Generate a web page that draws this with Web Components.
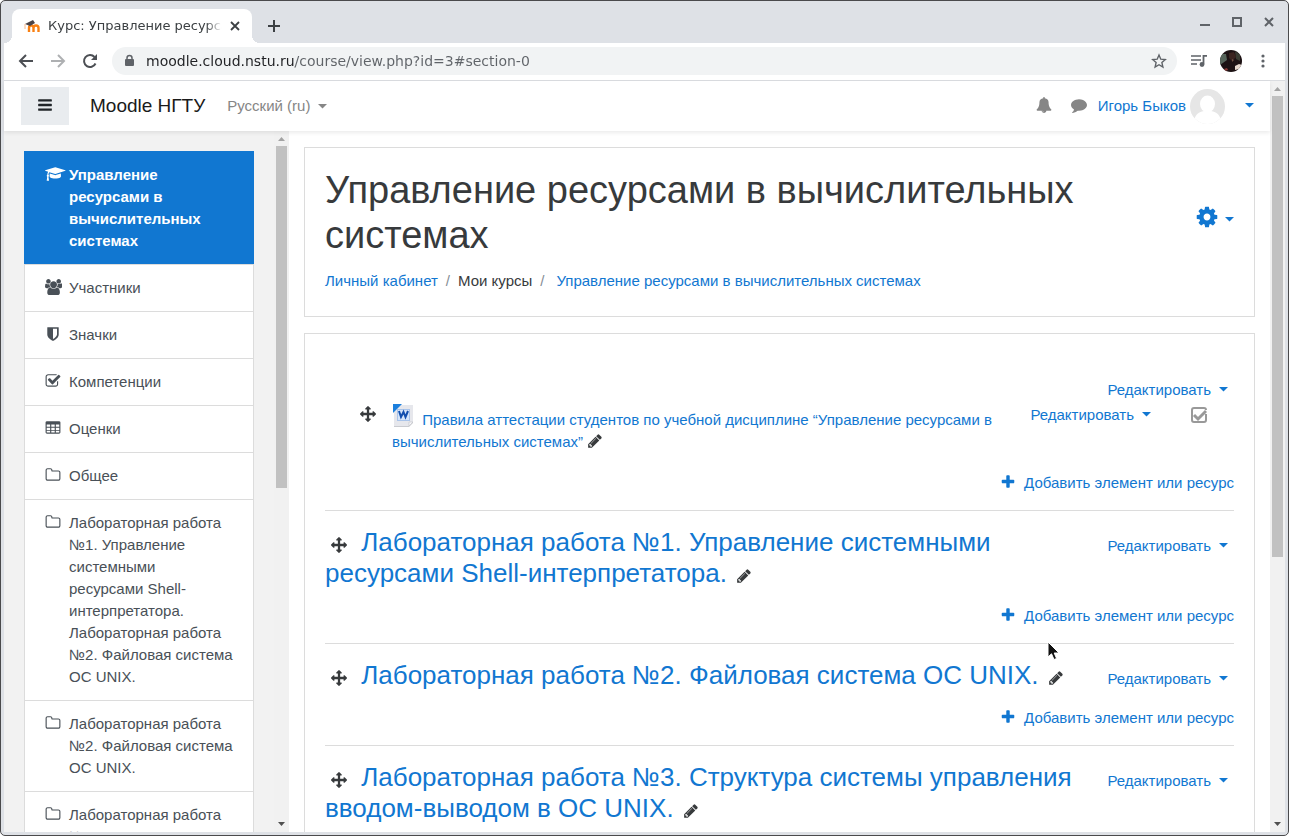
<!DOCTYPE html>
<html lang="ru">
<head>
<meta charset="utf-8">
<title>Курс: Управление ресурсами в вычислительных системах</title>
<style>
html,body{height:100%;margin:0}
body{font:15px/22px "Liberation Sans",Arial,sans-serif;color:#373a3c;background:#fff;overflow:hidden}
</style>
</head>
<body>
<browser-window>
  <browser-tabs slot="tabs">Курс: Управление ресурсами</browser-tabs>
  <browser-toolbar slot="toolbar"></browser-toolbar>
  <moodle-page>
    <moodle-navbar slot="navbar"></moodle-navbar>
    <course-drawer slot="drawer">
      <drawer-item icon="cap" active>Управление ресурсами в вычислительных системах</drawer-item>
      <drawer-item icon="users">Участники</drawer-item>
      <drawer-item icon="shield">Значки</drawer-item>
      <drawer-item icon="check">Компетенции</drawer-item>
      <drawer-item icon="table">Оценки</drawer-item>
      <drawer-item icon="folder">Общее</drawer-item>
      <drawer-item icon="folder">Лабораторная работа №1. Управление системными ресурсами Shell-интерпретатора. Лабораторная работа №2. Файловая система ОС UNIX.</drawer-item>
      <drawer-item icon="folder">Лабораторная работа №2. Файловая система ОС UNIX.</drawer-item>
      <drawer-item icon="folder">Лабораторная работа №3. Структура системы управления вводом-выводом в ОС UNIX.</drawer-item>
    </course-drawer>
    <content-card>
      <course-header>Управление ресурсами в вычислительных системах</course-header>
    </content-card>
    <content-card>
      <course-section untitled>
        <course-activity slot="activity">Правила аттестации студентов по учебной дисциплине “Управление ресурсами в вычислительных системах”</course-activity>
      </course-section>
      <course-section>Лабораторная работа №1. Управление системными ресурсами Shell-интерпретатора.</course-section>
      <course-section>Лабораторная работа №2. Файловая система ОС UNIX.</course-section>
      <course-section>Лабораторная работа №3. Структура системы управления вводом-выводом в ОС UNIX.</course-section>
    </content-card>
  </moodle-page>
  <mouse-pointer slot="pointer"></mouse-pointer>
</browser-window>

<script>
const define = (name, html, setup) => {
  const template = document.createElement('template');
  template.innerHTML = `<style>
    *{box-sizing:border-box}
    :host{display:block;box-sizing:border-box}
    a{color:#1177d1;text-decoration:none}
    button{font:inherit;color:inherit;background:none;border:0;padding:0;margin:0;cursor:pointer}
  </style>` + html;
  customElements.define(name, class extends HTMLElement {
    static observedAttributes = ['name', 'icon'];
    constructor() {
      super();
      this.attachShadow({mode: 'open'}).append(template.content.cloneNode(true));
    }
    connectedCallback() { if (setup) setup(this, this.shadowRoot); }
    attributeChangedCallback() { if (setup) setup(this, this.shadowRoot); }
  });
};

/* ---------- icons ---------- */
const ICONS = {
  bars: [1792, 'M1664 1344v128q0 26-19 45t-45 19h-1408q-26 0-45-19t-19-45v-128q0-26 19-45t45-19h1408q26 0 45 19t19 45zm0-512v128q0 26-19 45t-45 19h-1408q-26 0-45-19t-19-45v-128q0-26 19-45t45-19h1408q26 0 45 19t19 45zm0-512v128q0 26-19 45t-45 19h-1408q-26 0-45-19t-19-45v-128q0-26 19-45t45-19h1408q26 0 45 19t19 45z'],
  plus: [1792, 'M1600 736v192q0 40-28 68t-68 28h-416v416q0 40-28 68t-68 28h-192q-40 0-68-28t-28-68v-416h-416q-40 0-68-28t-28-68v-192q0-40 28-68t68-28h416v-416q0-40 28-68t68-28h192q40 0 68 28t28 68v416h416q40 0 68 28t28 68z'],
  cog: [1792, 'M1152 896q0-106-75-181t-181-75-181 75-75 181 75 181 181 75 181-75 75-181zm512-109v222q0 12-8 23t-20 13l-185 28q-19 54-39 91 35 50 107 138 10 12 10 25t-9 23q-27 37-99 108t-94 71q-12 0-26-9l-138-108q-44 23-91 38-16 136-29 186-7 28-36 28h-222q-14 0-24.500-8.500t-11.500-21.500l-28-184q-49-16-90-37l-141 107q-10 9-25 9-14 0-25-11-126-114-165-168-7-10-7-23 0-12 8-23 15-21 51-66.500t54-70.500q-27-50-41-99l-183-27q-13-2-21-12.500t-8-23.500v-222q0-12 8-23t19-13l186-28q14-46 39-92-40-57-107-138-10-12-10-24 0-10 9-23 26-36 98.500-107.500t94.500-71.500q13 0 26 10l138 107q44-23 91-38 16-136 29-186 7-28 36-28h222q14 0 24.500 8.500t11.500 21.500l28 184q49 16 90 37l142-107q9-9 24-9 13 0 25 10 129 119 165 170 7 8 7 22 0 12-8 23-15 21-51 66.500t-54 70.500q26 50 41 98l183 28q13 2 21 12.500t8 23.500z'],
  folder: [1792, 'M1600 1312v-704q0-40-28-68t-68-28h-704q-40 0-68-28t-28-68v-64q0-40-28-68t-68-28h-320q-40 0-68 28t-28 68v960q0 40 28 68t68 28h1216q40 0 68-28t28-68zm128-704v704q0 92-66 158t-158 66h-1216q-92 0-158-66t-66-158v-960q0-92 66-158t158-66h320q92 0 158 66t66 158v32h672q92 0 158 66t66 158z'],
  pencil: [1792, 'M491 1536l91-91-235-235-91 91v107h128v128h107zm523-928q0-22-22-22-10 0-17 7l-542 542q-7 7-7 17 0 22 22 22 10 0 17-7l542-542q7-7 7-17zm-54-192l416 416-832 832h-416v-416zm683 96q0 53-37 90l-166 166-416-416 166-165q36-38 90-38 53 0 91 38l235 234q37 39 37 91z'],
  move: [1792, 'M1792 896q0 26-19 45l-256 256q-19 19-45 19t-45-19-19-45v-128h-384v384h128q26 0 45 19t19 45-19 45l-256 256q-19 19-45 19t-45-19l-256-256q-19-19-19-45t19-45 45-19h128v-384h-384v128q0 26-19 45t-45 19-45-19l-256-256q-19-19-19-45t19-45l256-256q19-19 45-19t45 19 19 45v128h384v-384h-128q-26 0-45-19t-19-45 19-45l256-256q19-19 45-19t45 19l256 256q19 19 19 45t-19 45-45 19h-128v384h384v-128q0-26 19-45t45-19 45 19l256 256q19 19 19 45z'],
  check: [1792, 'M1472 930v318q0 119-84.500 203.500t-203.500 84.500h-832q-119 0-203.500-84.500t-84.500-203.500v-832q0-119 84.500-203.500t203.500-84.500h832q63 0 117 25 15 7 18 23 3 17-9 29l-49 49q-10 10-23 10-3 0-9-2-23-6-45-6h-832q-66 0-113 47t-47 113v832q0 66 47 113t113 47h832q66 0 113-47t47-113v-254q0-13 9-22l64-64q10-10 23-10 6 0 12 3 20 8 20 29zm231-489l-814 814q-24 24-57 24t-57-24l-430-430q-24-24-24-57t24-57l110-110q24-24 57-24t57 24l263 263 647-647q24-24 57-24t57 24l110 110q24 24 24 57t-24 57z'],
  table: [1792, 'M224 128h1344q66 0 113 47t47 113v1088q0 66-47 113t-113 47h-1344q-66 0-113-47t-47-113v-1088q0-66 47-113t113-47zM192 512v256h384v-256zM704 512v256h384v-256zM1216 512v256h384v-256zM192 864v256h384v-256zM704 864v256h384v-256zM1216 864v256h384v-256zM192 1216v192h384v-192zM704 1216v192h384v-192zM1216 1216v192h384v-192z'],
  bell: [1792, 'M912 1696q0-16-16-16-59 0-101.500-42.500t-42.500-101.500q0-16-16-16t-16 16q0 73 51.500 124.500t124.500 51.500q16 0 16-16zm816-288q0 52-38 90t-90 38h-448q0 106-75 181t-181 75-181-75-75-181h-448q-52 0-90-38t-38-90q50-42 91-88t85-119.500 74.500-158.500 50-206 19.500-260q0-152 117-282.500t307-158.500q-8-19-8-39 0-40 28-68t68-28 68 28 28 68q0 20-8 39 190 28 307 158.500t117 282.500q0 139 19.500 260t50 206 74.500 158.500 85 119.500 91 88z'],
  comment: [1792, 'M1792 896q0 174-120 321.500t-326 233-450 85.500q-70 0-145-8-198 175-460 242-49 14-114 22-17 2-30.500-9t-17.500-29v-1q-3-4-.5-12t2-10 4.500-9.500l6-9 7-8.500 8-9q7-8 31-34.500t34.500-38 31-39.500 32.500-51 27-59 26-76q-157-89-247.500-220t-90.500-281q0-130 71-248.500t191-204.500 286-136.500 348-50.500q244 0 450 85.500t326 233 120 321.500z'],
  cap: [2304, 'M1774 836l18 316q4 69-82 128t-235 93.500-323 34.500-323-34.500-235-93.500-82-128l18-316 574 181q22 7 48 7t48-7zm530-324q0 23-22 31l-1120 352q-4 1-10 1t-10-1l-652-206q-43 34-71 111.500t-34 178.500q63 36 63 109 0 69-58 107l58 433q2 14-8 25-9 11-24 11h-192q-15 0-24-11-10-11-8-25l58-433q-58-38-58-107 0-73 65-111 11-207 98-330l-333-104q-22-8-22-31t22-31l1120-352q4-1 10-1t10 1l1120 352q22 8 22 31z'],
  shield: [1792, 'M1344 960v-640h-448v1137q119-63 213-137 235-184 235-360zm192-768v768q0 86-33.500 170.500t-83 150-118 127.500-126.500 103-121 77.500-89.500 49.500-42.500 20q-12 6-26 6t-26-6q-16-7-42.500-20t-89.500-49.500-121-77.500-126.500-103-118-127.500-83-150-33.500-170.500v-768q0-26 19-45t45-19h1152q26 0 45 19t19 45z'],
  users: [1920, 'M593 896q-162 5-265 128h-134q-82 0-138-40.500t-56-118.500q0-353 124-353 6 0 43.500 21t97.500 42.500 119 21.500q67 0 133-23-5 37-5 66 0 159 93 294zm1071 637q0 120-73 189.500t-194 69.500h-874q-121 0-194-69.500t-73-189.500q0-53 3.500-103.500t14-109 26.500-108.500 43-97.500 62-81 85.500-53.500 111.500-20q10 0 43 21.500t73 48 107 48 135 21.500 135-21.500 107-48 73-48 43-21.500q61 0 111.500 20t85.500 53.500 62 81 43 97.500 26.500 108.500 14 109 3.500 103.500zm-1024-1277q0 106-75 181t-181 75-181-75-75-181 75-181 181-75 181 75 75 181zm704 384q0 159-112.500 271.500t-271.500 112.500-271.500-112.500-112.500-271.500 112.500-271.500 271.500-112.500 271.500 112.500 112.500 271.500zm576 225q0 78-56 118.500t-138 40.500h-134q-103-123-265-128 93-135 93-294 0-29-5-66 66 23 133 23 59 0 119-21.500t97.500-42.500 43.500-21q124 0 124 353zm-128-609q0 106-75 181t-181 75-181-75-75-181 75-181 181-75 181 75 75 181z']
};
define('fa-icon', `<style>
  :host{display:inline-block;height:16px;line-height:0;vertical-align:-2px}
  svg{height:100%;width:auto;fill:currentColor;fill-rule:evenodd;display:block}
</style><svg aria-hidden="true"><path/></svg>`, (el, root) => {
  const icon = ICONS[el.getAttribute('name')];
  if (!icon) return;
  const svg = root.querySelector('svg');
  svg.setAttribute('viewBox', `0 0 ${icon[0]} 1792`);
  svg.firstChild.setAttribute('d', icon[1]);
});
define('drop-caret', `<style>
  :host{display:inline-block;width:9px;height:5px;line-height:0}
</style><svg width="9" height="5" aria-hidden="true"><path d="M0 0h9L4.500 4.500z" fill="currentColor"/></svg>`);

/* ---------- scroll bar; --thumb is the share of the track it fills ---------- */
define('scroll-bar', `<style>
  :host{display:flex;flex-direction:column;flex:none;width:15px;background:#f1f1f1;align-items:center}
  svg{flex:none;display:block}
  .track{flex:1;width:100%;padding:0 2px}
  .thumb{background:#c1c1c1;height:var(--thumb)}
</style>
<svg width="15" height="15"><path d="M4 10h7L7.500 6z" fill="#a3a3a3"/></svg>
<div class="track"><div class="thumb"></div></div>
<svg width="15" height="15"><path d="M4 5h7L7.500 9z" fill="#505050"/></svg>`);

/* ---------- browser frame ---------- */
define('browser-window', `<style>
  :host{height:100vh;display:flex;flex-direction:column;border:1px solid #4a4a4c;border-radius:5px;background:#dee1e6;overflow:hidden;position:relative}
  .body{flex:1;min-height:0;display:flex;flex-direction:column;margin:0 3px 3px}
  ::slotted(moodle-page){flex:1;min-height:0}
</style>
<slot name="tabs"></slot>
<div class="body"><slot name="toolbar"></slot><slot></slot></div>
<slot name="pointer"></slot>`);

define('browser-tabs', `<style>
  :host{display:flex;flex:none;height:42px;padding:8px 13px 0 11px;color:#3c4043;font:13px/34px "DejaVu Sans",sans-serif}
  .tab{position:relative;width:240px;height:34px;background:#fff;border-radius:8px 8px 0 0;display:flex;align-items:center;padding:0 12px}
  .tab::before,.tab::after{content:"";position:absolute;bottom:0;width:8px;height:8px}
  .tab::before{left:-8px;background:radial-gradient(circle at 0 0,transparent 8px,#fff 8px)}
  .tab::after{right:-8px;background:radial-gradient(circle at 100% 0,transparent 8px,#fff 8px)}
  .title{flex:1;margin:0 8px 0 7px;white-space:nowrap;overflow:hidden;-webkit-mask:linear-gradient(to left,transparent,#000 16px);mask:linear-gradient(to left,transparent,#000 16px)}
  button{display:flex;align-items:center}
  .new{margin-left:15px;align-self:center}
  .win{margin-left:auto;display:flex;gap:20px;height:26px}
  svg{display:block}
</style>
<div class="tab">
  <svg width="17" height="16" viewBox="0 0 17 16"><path d="M5 14V10C5 6.600 9.500 6.600 9.500 10V14M9.500 10C9.500 6.600 14.500 6.600 14.500 10V14" fill="none" stroke="#f98012" stroke-width="2.400"/><path d="M1 6L9 2l2 3-5 3z" fill="#4a4346"/><path d="M1 6v5" stroke="#f7b98a"/></svg>
  <span class="title"><slot></slot></span>
  <button aria-label="Закрыть вкладку"><svg width="10" height="10"><path d="M1 1l8 8M9 1L1 9" stroke="#3c4043" stroke-width="1.800"/></svg></button>
</div>
<button class="new" aria-label="Новая вкладка"><svg width="14" height="14"><path d="M7 1v12M1 7h12" stroke="#3c4043" stroke-width="2"/></svg></button>
<div class="win">
  <button aria-label="Свернуть"><svg width="12" height="12"><path d="M1 9h10" stroke="#5f6368" stroke-width="2"/></svg></button>
  <button aria-label="Развернуть"><svg width="12" height="12"><path d="M2 2h8v8H2z" fill="none" stroke="#5f6368" stroke-width="2"/></svg></button>
  <button aria-label="Закрыть"><svg width="12" height="12"><path d="M2 2l8 8M10 2l-8 8" stroke="#5f6368" stroke-width="2"/></svg></button>
</div>`);

define('browser-toolbar', `<style>
  :host{display:flex;flex:none;align-items:center;height:38px;background:#fff;border-bottom:1px solid #dadce0;padding:0 14px 1px;color:#5f6368}
  .nav{display:flex;gap:16px;margin-right:14px}
  button{display:flex}
  .off{opacity:.5}
  .pill{flex:1;height:28px;border-radius:14px;background:#f1f3f4;display:flex;align-items:center;padding:0 10px 0 12px}
  input{flex:1;min-width:0;height:28px;border:0;padding:0;margin:0 11px;outline:0;font:14px/28px "DejaVu Sans",sans-serif;color:transparent;background:linear-gradient(to right,#202124 149px,#5f6368 149px);-webkit-background-clip:text;background-clip:text}
  .tools{display:flex;align-items:center;gap:13px;margin-left:14px}
</style>
<div class="nav">
  <button aria-label="Назад"><svg width="16" height="16"><path d="M15 8H3M8 2L2 8l6 6" fill="none" stroke="#4c4f54" stroke-width="2"/></svg></button>
  <button class="off" aria-label="Вперёд"><svg width="16" height="16"><path d="M1 8h12M8 2l6 6-6 6" fill="none" stroke="#5f6368" stroke-width="2"/></svg></button>
  <button aria-label="Обновить"><svg width="16" height="16"><path d="M13.500 10.500A6 6 0 1 1 12.500 4" fill="none" stroke="#4c4f54" stroke-width="2"/><path d="M15 1v6H9z" fill="#4c4f54"/></svg></button>
</div>
<div class="pill">
  <svg width="11" height="14"><path d="M3 6V4a2.500 2.500 0 0 1 5 0v2" fill="none" stroke="#5f6368" stroke-width="1.500"/><rect x="1" y="5" width="9" height="7" rx="1" fill="#5f6368"/></svg>
  <input type="text" aria-label="Адрес" value="moodle.cloud.nstu.ru/course/view.php?id=3#section-0">
  <button aria-label="Добавить в закладки"><svg width="16" height="16"><path d="M8 2l1.800 4.200 4.500.4-3.400 3 1 4.400L8 11.700 4.100 14l1-4.400-3.400-3 4.500-.4z" fill="none" stroke="#5f6368" stroke-width="1.400"/></svg></button>
</div>
<div class="tools">
  <button aria-label="Медиа"><svg width="16" height="14"><path d="M0 2h10M0 6h10M0 10h6" stroke="#5f6368" stroke-width="1.600"/><path d="M12.500 10V1.800H16" fill="none" stroke="#5f6368" stroke-width="1.800"/><circle cx="11" cy="10.500" r="2.400" fill="#5f6368"/></svg></button>
  <button aria-label="Профиль"><svg width="22" height="22" viewBox="0 0 22 22"><clipPath id="c"><circle cx="11" cy="11" r="11"/></clipPath><g clip-path="url(#c)"><path fill="#1d1214" d="M0 0h22v22H0z"/><path fill="#56645a" d="M0 4h6l1 6-7 5z"/><path fill="#3a3d33" d="M15 1l5 4v6l-4-2z"/><path fill="#3b2420" d="M9 3l5-1 2 5-4 4-3-3z"/><path fill="#705044" d="M12 9l2 1-2 2z"/><path fill="#e6d8cd" d="M15 16l4-2 3 1-3 4-4 1z"/><path fill="#8d3a38" d="M4 19l3-1 1 2-3 1z"/></g></svg></button>
  <button aria-label="Меню"><svg width="16" height="16"><g fill="#5f6368"><circle cx="8" cy="3" r="1.600"/><circle cx="8" cy="8" r="1.600"/><circle cx="8" cy="13" r="1.600"/></g></svg></button>
</div>`);

/* ---------- moodle page ---------- */
define('moodle-page', `<style>
  :host{display:flex;background:#fff}
  .page{flex:1;min-width:0;display:flex;flex-direction:column}
  .cols{flex:1;min-height:0;display:flex}
  ::slotted([slot=drawer]){flex:none;width:285px}
  main{flex:1;min-width:0;overflow:hidden;padding:16px 15px 0;display:flex;flex-direction:column;gap:16px}
  scroll-bar{--thumb:64%}
</style>
<div class="page"><slot name="navbar"></slot><div class="cols"><slot name="drawer"></slot><main><slot></slot></main></div></div>
<scroll-bar></scroll-bar>`);

define('moodle-navbar', `<style>
  :host{flex:none;display:flex;align-items:center;height:50px;background:#fff;padding:0 16px 0 17px;box-shadow:0 2px 4px rgba(0,0,0,.08);position:relative;z-index:1;color:#868686}
  .menu{width:48px;height:38px;background:#e9ecef;color:#212529}
  .brand{font-size:19px;color:#1a1a1a;margin:0 22px 0 21px}
  .lang{display:flex;align-items:center;gap:8px}
  .right{margin-left:auto;display:flex;align-items:center}
  .right>button+button{margin-left:19px}
  .user{display:flex;align-items:center;gap:4px;margin-left:11px}
  .user svg{display:block}
  .more{color:#1177d1;margin-left:20px;padding-bottom:2px;display:flex}
</style>
<button class="menu" aria-label="Боковая панель"><fa-icon name="bars"></fa-icon></button>
<a class="brand" href="#">Moodle НГТУ</a>
<button class="lang">Русский (ru)<drop-caret></drop-caret></button>
<div class="right">
  <button aria-label="Уведомления"><fa-icon name="bell"></fa-icon></button>
  <button aria-label="Сообщения"><fa-icon name="comment"></fa-icon></button>
  <a class="user" href="#">Игорь Быков<svg width="35" height="35" viewBox="0 0 35 35"><clipPath id="a"><circle cx="17.500" cy="17.500" r="17.500"/></clipPath><g clip-path="url(#a)"><path fill="#e6e6e6" d="M0 0h35v35H0z"/><g fill="#fff"><ellipse cx="17.500" cy="15" rx="7.500" ry="8.500"/><path d="M4 35c0-9 4-12 10-13h7c6 1 10 4 10 13z"/></g></g></svg></a>
  <button class="more" aria-label="Меню пользователя"><drop-caret></drop-caret></button>
</div>`);

define('course-drawer', `<style>
  :host{display:flex;background:#f2f2f2;overflow:hidden}
  nav{flex:1;padding:20px 20px 0;overflow:hidden}
  scroll-bar{--thumb:51%}
</style><nav aria-label="Курс"><slot></slot></nav><scroll-bar></scroll-bar>`);

define('drawer-item', `<style>
  a{display:grid;grid-template-columns:24px 1fr;padding:12px 20px;background:#fff;border:1px solid #dcdcdc;border-bottom:0;color:#495057}
  fa-icon{margin-top:2px}
  :host([active]) a{background:#1177d1;border-color:#1177d1;color:#fff;font-weight:bold}
</style><a href="#"><fa-icon></fa-icon><span><slot></slot></span></a>`,
(el, root) => root.querySelector('fa-icon').setAttribute('name', el.getAttribute('icon')));

define('content-card', `<style>
  :host{flex:none;background:#fff;border:1px solid #dcdcdc;padding:20px}
</style><slot></slot>`);

define('course-header', `<style>
  :host{display:flex;padding-bottom:4px}
  .text{flex:1}
  h1{margin:0 0 12px;font-size:38px;line-height:45px;font-weight:normal;max-width:800px}
  ol{list-style:none;display:flex;gap:8px;margin:0;padding:0}
  li{display:flex;gap:8px}
  .sep{color:#868e96}
  .last{gap:12px}
  .gear{align-self:flex-start;display:flex;align-items:center;gap:6px;color:#1177d1;margin-top:37px}
  .gear fa-icon{height:24px}
  .gear drop-caret{margin-top:4px}
</style>
<div class="text">
  <h1><slot></slot></h1>
  <nav aria-label="Навигация"><ol>
    <li><a href="#">Личный кабинет</a></li>
    <li><span class="sep">/</span><span>Мои курсы</span></li>
    <li class="last"><span class="sep">/</span><a href="#">Управление ресурсами в вычислительных системах</a></li>
  </ol></nav>
</div>
<button class="gear" aria-label="Настройки курса"><fa-icon name="cog"></fa-icon><drop-caret></drop-caret></button>`);

define('edit-menu', `<style>
  :host{display:block;flex:none}
  button{display:flex;align-items:center;gap:8px;color:#1177d1;line-height:22px}
  drop-caret{margin-top:-2px}
</style><button>Редактировать<drop-caret></drop-caret></button>`);

define('course-section', `<style>
  :host{padding:16px 0;border-top:1px solid #dcdcdc}
  :host([untitled]){padding-top:25px;border-top:0}
  .head{display:flex;justify-content:flex-end;padding-right:6px}
  h3{flex:1;margin:0;font-size:26px;line-height:31px;font-weight:normal;padding-right:16px}
  :host([untitled]) h3{display:none}
  edit-menu{margin-top:8px}
  :host([untitled]) edit-menu{margin:0 0 3px}
  .move{margin:0 7px 0 6px;line-height:22px}
  .edit{margin-left:2px;line-height:22px;color:#373a3c}
  .add{display:flex;justify-content:flex-end;margin-top:16px}
  .add a{display:flex;align-items:center;gap:8px}
  .add fa-icon{margin-bottom:2px}
</style>
<div class="head">
  <h3><button class="move" aria-label="Переместить"><fa-icon name="move"></fa-icon></button> <a href="#"><slot></slot></a> <button class="edit" aria-label="Изменить название"><fa-icon name="pencil"></fa-icon></button></h3>
  <edit-menu></edit-menu>
</div>
<slot name="activity"></slot>
<div class="add"><a href="#"><fa-icon name="plus"></fa-icon>Добавить элемент или ресурс</a></div>`);

const tick = "url(\"data:image/svg+xml,%3Csvg xmlns='http://www.w3.org/2000/svg' width='16' height='16'%3E%3Cpath d='M15 7v6a2 2 0 0 1-2 2H3a2 2 0 0 1-2-2V3a2 2 0 0 1 2-2h10a2 2 0 0 1 2 2' fill='none' stroke='%23999' stroke-width='2'/%3E%3Cpath d='M3 8l4 4 8-8' fill='none' stroke='%23999' stroke-width='3'/%3E%3C/svg%3E\")";
define('course-activity', `<style>
  :host{display:flex;align-items:flex-start;padding:0 27px 3px 35px}
  .move{line-height:22px;margin-right:16px}
  .name{flex:1;max-width:616px}
  .file{vertical-align:-3px;margin-right:2px}
  .edit{color:#373a3c}
  edit-menu{margin-left:auto}
  input{appearance:none;-webkit-appearance:none;width:16px;height:16px;margin:3px 0 0 40px;background:${tick}}
</style>
<button class="move" aria-label="Переместить"><fa-icon name="move"></fa-icon></button>
<div class="name"><a href="#"><svg class="file" width="24" height="24" viewBox="0 0 24 24"><path d="M3 2h18v17l-4 4H2V3z" fill="#c9cbd0"/><path d="M2 1h19v17l-4 4H2z" fill="#e6e7ec"/><path d="M17 22v-4h4z" fill="#f8f8fa" stroke="#b5b7bd" stroke-width=".5"/><path d="M1 0h9L1 9z" fill="#1b7fdd"/><rect x="5.500" y="5.500" width="12" height="11" fill="#d6e6fa" stroke="#a9c4ea"/><path d="M7 7l2 6 2.500-5 2 5L16 7" fill="none" stroke="#124fae" stroke-width="2"/></svg> <slot></slot></a> <button class="edit" aria-label="Изменить название"><fa-icon name="pencil"></fa-icon></button></div>
<edit-menu></edit-menu>
<input type="checkbox" checked aria-label="Выполнено">`);

define('mouse-pointer', `<style>
  :host{position:absolute;left:1046px;top:640px;pointer-events:none;z-index:5}
  svg{display:block}
</style><svg width="14" height="20"><path d="M1 1v15l3.500-3.200L7 18.500l2.600-1L7.200 12H12z" fill="#111" stroke="#fff"/></svg>`);
</script>
</body>
</html>
